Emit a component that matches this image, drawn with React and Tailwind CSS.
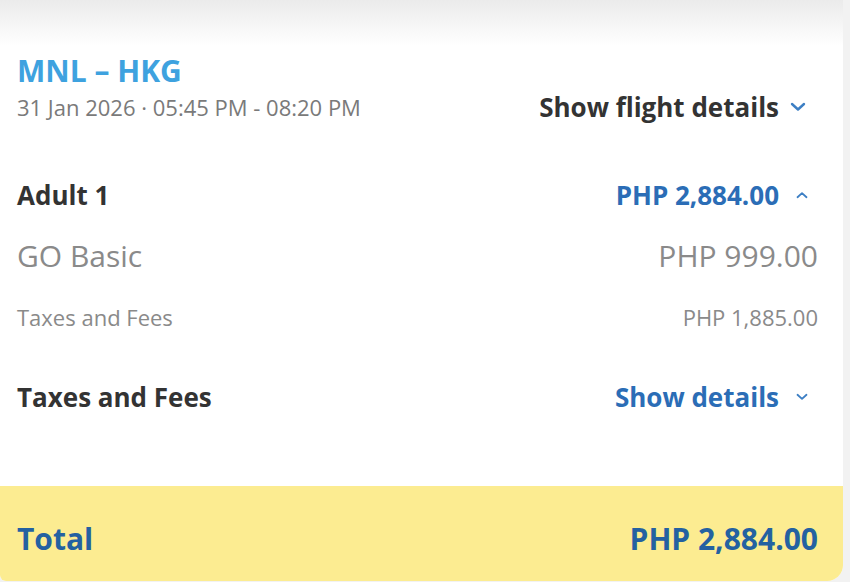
import React from 'react';

const Chevron = ({ up = false, className = '' }) => (
  <svg viewBox="0 0 16 10" className={className} fill="none">
    <path
      d={up ? 'M2 8 L8 2.5 L14 8' : 'M2 2 L8 7.5 L14 2'}
      stroke="currentColor"
      strokeWidth="2.4"
      strokeLinecap="round"
      strokeLinejoin="round"
    />
  </svg>
);

const App = () => {
  return (
    <div
      className="w-[850px] h-[582px] bg-[#f2f2f2] overflow-hidden"
      style={{ fontFamily: '"Open Sans", "Noto Sans", sans-serif' }}
    >
      <div className="w-[843px] h-[581px] bg-white rounded-bl-[6px] rounded-br-[16px] flex flex-col overflow-hidden">
        {/* shadow from header above */}
        <div className="h-[46px] shrink-0 bg-gradient-to-b from-[#ebebeb] to-white" />

        {/* flight */}
        <div className="pl-[17px] pr-[25px]">
          <div className="mt-[5px] text-[30px] font-bold text-[#3ea2df] leading-[40px]">MNL – HKG</div>
          <div className="flex items-center justify-between h-[30px] mt-[1px]">
            <span className="text-[22px] text-[#7a7a7a] leading-[30px]">31 Jan 2026 · 05:45 PM - 08:20 PM</span>
            <span className="flex items-center gap-[11px] mr-[12px]">
              <span className="text-[26px] font-bold text-[#333333] leading-[30px]">Show flight details</span>
              <Chevron className="w-[16px] h-[10px] text-[#3d7fc4]" />
            </span>
          </div>
        </div>

        {/* fare breakdown */}
        <div className="pl-[17px] pr-[25px] mt-[55px] flex flex-col">
          <div className="flex items-center justify-between h-[36px] leading-[36px]">
            <span className="text-[26px] font-bold text-[#333333]">Adult 1</span>
            <span className="flex items-center gap-[17px] mr-[10px]">
              <span className="text-[26px] font-bold text-[#2b6db6]">PHP 2,884.00</span>
              <Chevron up className="w-[12px] h-[8px] text-[#3d7fc4]" />
            </span>
          </div>
          <div className="flex items-center justify-between h-[40px] leading-[40px] mt-[23px]">
            <span className="text-[30px] text-[#8a8a8a]">GO Basic</span>
            <span className="text-[30px] text-[#8a8a8a]">PHP 999.00</span>
          </div>
          <div className="flex items-center justify-between h-[30px] leading-[30px] mt-[26px]">
            <span className="text-[22px] text-[#8a8a8a]">Taxes and Fees</span>
            <span className="text-[22px] text-[#8a8a8a]">PHP 1,885.00</span>
          </div>
          <div className="flex items-center justify-between h-[36px] leading-[36px] mt-[47px]">
            <span className="text-[26px] font-bold text-[#333333]">Taxes and Fees</span>
            <span className="flex items-center gap-[17px] mr-[10px]">
              <span className="text-[26px] font-bold text-[#2b6db6]">Show details</span>
              <Chevron className="w-[12px] h-[8px] text-[#3d7fc4]" />
            </span>
          </div>
        </div>

        {/* total */}
        <div className="mt-auto h-[95px] shrink-0 bg-[#fcec91] pl-[17px] pr-[25px] pt-[10px] flex items-center justify-between">
          <span className="text-[30px] font-bold text-[#2461a1] leading-[40px]">Total</span>
          <span className="text-[30px] font-bold text-[#2461a1] leading-[40px]">PHP 2,884.00</span>
        </div>
      </div>
    </div>
  );
};

export default App;
